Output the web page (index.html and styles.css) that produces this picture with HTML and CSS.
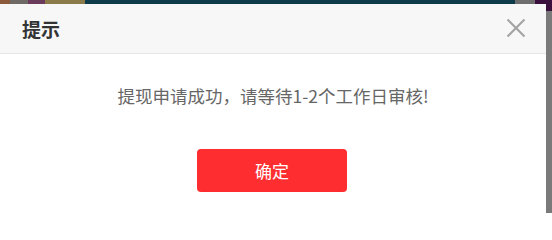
FILE: index.html
```html
<!DOCTYPE html>
<html lang="zh">
<head>
<meta charset="utf-8">
<title>提示</title>
<link rel="stylesheet" href="styles.css">
</head>
<body>
<div class="topbar">
  <span class="seg seg-brown"></span>
  <span class="seg seg-gray"></span>
  <span class="seg seg-plum"></span>
  <span class="seg seg-olive"></span>
  <span class="seg seg-teal"></span>
  <span class="seg seg-gray2"></span>
  <span class="seg seg-purple"></span>
</div>
<div class="main">
  <div class="dialog">
    <div class="dialog-header">
      <span class="dialog-title">提示</span>
      <button class="dialog-close" aria-label="关闭">
        <svg width="20" height="20" viewBox="0 0 20 20">
          <path d="M1.5 1.5 L18.5 18.5 M18.5 1.5 L1.5 18.5" stroke="#a3a3a3" stroke-width="2" fill="none"/>
        </svg>
      </button>
    </div>
    <div class="dialog-body">
      <p class="dialog-message">提现申请成功，请等待1-2个工作日审核!</p>
      <button class="dialog-btn">确定</button>
    </div>
  </div>
  <div class="side"></div>
</div>
</body>
</html>
```

FILE: styles.css
```css
* { box-sizing: border-box; }
html, body {
  margin: 0;
  padding: 0;
  background: #ffffff;
  font-family: "Noto Sans CJK SC", "Noto Sans", "Liberation Sans", sans-serif;
  overflow: hidden;
}
.topbar {
  display: flex;
  height: 4px;
}
.seg { display: block; height: 100%; }
.seg-brown { width: 10px; background: #8a5a3a; }
.seg-gray { width: 18px; background: #6f6a66; }
.seg-plum { width: 17px; background: #6a3b5a; }
.seg-olive { width: 40px; background: #8c7a4a; }
.seg-teal { flex: 1; background: #0d3b49; }
.seg-gray2 { width: 20px; background: #6e6e6e; }
.seg-purple { width: 17px; background: #3a0f3e; }

.main {
  display: flex;
  height: 209px;
}
.dialog {
  flex: 0 0 546px;
  background: #ffffff;
}
.side {
  flex: 1;
  background: linear-gradient(to bottom, #3a0f3e 0, #3a0f3e 7px, #7a7a7a 7px, #7a7a7a 100%);
}
.dialog-header {
  display: flex;
  align-items: center;
  justify-content: space-between;
  height: 50px;
  padding: 0 20px 0 22px;
  background: #f7f7f7;
  border-bottom: 1px solid #e6e6e6;
}
.dialog-title {
  font-size: 19px;
  font-weight: bold;
  color: #333333;
  line-height: 20px;
}
.dialog-close {
  border: 0;
  background: none;
  padding: 0;
  width: 20px;
  height: 20px;
  display: flex;
  margin-top: -2px;
}
.dialog-body {
  display: flex;
  flex-direction: column;
  align-items: center;
  padding-top: 30px;
}
.dialog-message {
  margin: 0;
  font-size: 17.5px;
  line-height: 24px;
  color: #666666;
}
.dialog-btn {
  margin-top: 41px;
  width: 150px;
  height: 43px;
  border: 0;
  border-radius: 4px;
  background: #fe2e30;
  color: #ffffff;
  font-family: inherit;
  font-size: 17px;
  line-height: 43px;
  padding: 0;
  margin-left: -2px;
}
```
